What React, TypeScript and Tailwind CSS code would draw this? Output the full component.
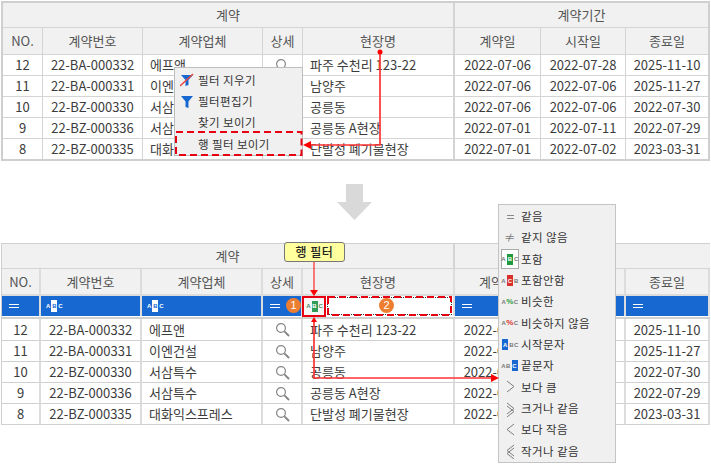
import React from "react";

const rows = [
  ["12", "22-BA-000332", "에프앤", "파주 수천리 123-22", "2022-07-06", "2022-07-28", "2025-11-10"],
  ["11", "22-BA-000331", "이엔건설", "남양주", "2022-07-06", "2022-07-06", "2025-11-27"],
  ["10", "22-BZ-000330", "서삼특수", "공릉동", "2022-07-06", "2022-07-06", "2022-07-30"],
  ["9", "22-BZ-000336", "서삼특수", "공릉동 A현장", "2022-07-01", "2022-07-11", "2022-07-29"],
  ["8", "22-BZ-000335", "대화익스프레스", "단발성 폐기물현장", "2022-07-01", "2022-07-02", "2023-03-31"],
];
const heads = ["NO.", "계약번호", "계약업체", "상세", "현장명", "계약일", "시작일", "종료일"];

function Lens() {
  return (
    <svg width="15" height="15" viewBox="0 0 15 15" fill="none" stroke="#858585">
      <circle cx="6" cy="6" r="4.4" strokeWidth="1.2" />
      <path d="M9.4 9.4L14 14" strokeWidth="1.9" />
    </svg>
  );
}

function Abc({ box, letters = "ABC", side = "text-[#6b6b6b]", i = 1 }: { box: string; letters?: string; side?: string; i?: number }) {
  const l = letters.split("");
  return (
    <span className="inline-flex h-[12px] items-center font-['Liberation_Sans',sans-serif] text-[6px] font-bold leading-none">
      {l.map((c, n) =>
        n === i ? (
          <span key={n} className={`mx-px flex h-[11px] w-[6px] items-center justify-center text-white ${box}`}>{c}</span>
        ) : (
          <span key={n} className={side}>{c}</span>
        ),
      )}
    </span>
  );
}

function Cell({ children, className = "", center = true }: { children?: React.ReactNode; className?: string; center?: boolean }) {
  return <div className={`flex items-center overflow-hidden whitespace-nowrap ${center ? "justify-center" : "pl-[7px]"} ${className}`}>{children}</div>;
}

function TopTable() {
  const colB = ["border-r", "border-r", "border-r", "border-r", "border-r-2", "border-r", "border-r", ""];
  return (
    <div className="ml-px mt-px grid w-[709px] grid-cols-[40px_100px_120px_40px_152px_86px_85px_82px] border-2 border-[#cfcfcf] text-[13px] text-[#3c3c3c]">
      <Cell className="col-span-5 h-[25px] border-b border-r-2 border-[#d4d4d4] bg-[#f1f1f1] text-[#555]">계약</Cell>
      <Cell className="col-span-3 h-[25px] border-b border-[#d4d4d4] bg-[#f1f1f1] text-[#555]">계약기간</Cell>
      {heads.map((h, i) => (
        <Cell key={h} className={`h-[27px] border-b border-[#d4d4d4] bg-[#f1f1f1] text-[#555] ${colB[i]}`}>{h}</Cell>
      ))}
      {rows.map((r, ri) => (
        <React.Fragment key={r[0]}>
          {[r[0], r[1], r[2], "", r[3], r[4], r[5], r[6]].map((v, i) => (
            <Cell key={i} center={i !== 2 && i !== 4} className={`${ri === 4 ? "h-[20px]" : "h-[21px] border-b"} border-[#d4d4d4] ${colB[i]}`}>
              {i === 3 ? <Lens /> : v}
            </Cell>
          ))}
        </React.Fragment>
      ))}
    </div>
  );
}

function Eq() {
  return (
    <span className="flex flex-col gap-[2px]">
      <span className="h-px w-[10px] bg-white" />
      <span className="h-px w-[10px] bg-white" />
    </span>
  );
}

function WhiteAbc() {
  return (
    <span className="inline-flex h-[12px] items-center font-['Liberation_Sans',sans-serif] text-[6px] font-bold leading-none text-white">
      A<span className="mx-px flex h-[12px] w-[6px] items-center justify-center bg-white text-[#1769d1]">B</span>C
    </span>
  );
}

function BottomTable() {
  const b = "border-r-2 border-[#dcdcdc]";
  const filters = [<Eq />, <WhiteAbc />, <WhiteAbc />, <Eq />, null, <Eq />, <Eq />, <Eq />];
  return (
    <div className="ml-px mt-[22px] grid w-[709px] grid-cols-[39px_101px_121px_40px_152px_86px_85px_84px] border-l border-t border-[#cfcfcf] text-[13px] text-[#3c3c3c]">
      <Cell className="col-span-5 h-[25px] border-b border-r-2 border-[#d4d4d4] bg-[#f1f1f1] text-[#555]">계약</Cell>
      <Cell className="col-span-3 h-[25px] border-b border-[#d4d4d4] bg-[#f1f1f1] text-[#555]">계약기간</Cell>
      {heads.map((h) => (
        <Cell key={h} className={`h-[27px] border-b-2 bg-[#f1f1f1] text-[#555] ${b}`}>{h}</Cell>
      ))}
      {filters.map((f, i) =>
        i === 4 ? (
          <div key={i} className={`flex h-[20px] bg-white ${b}`}>
            <div className="flex w-[23px] items-center justify-center bg-[#f6f6f6]">
              <Abc box="bg-[#2e9b57]" side="text-[#4a8a62]" />
            </div>
            <div className="m-px flex-1 border border-dotted border-[#333] bg-white" />
          </div>
        ) : (
          <div key={i} className={`flex h-[20px] items-center bg-[#1769d1] ${i === 1 || i === 2 ? "pl-[5px]" : "pl-[7px]"} ${b}`}>
            {f}
          </div>
        ),
      )}
      <div className="col-span-8 h-[3px] border-b-2 border-[#d0d0d0] bg-white" />
      {rows.map((r, ri) => (
        <React.Fragment key={r[0]}>
          {[r[0], r[1], r[2], "", r[3], r[4], r[5], r[6]].map((v, i) => (
            <Cell key={i} center={i !== 2 && i !== 4} className={`${ri === 0 ? "h-[22px]" : "h-[21px]"} border-b border-b-[#d0d0d0] ${b}`}>
              {i === 3 ? <Lens /> : v}
            </Cell>
          ))}
        </React.Fragment>
      ))}
    </div>
  );
}

function TopMenu() {
  const items: [React.ReactNode, string][] = [
    [
      <svg width="14" height="14" viewBox="0 0 14 14">
        <path d="M1 2h12L8.5 7v5l-3 1V7z" fill="#1769d1" />
        <path d="M0 13L13 1" stroke="#e8483f" strokeWidth="1.4" />
      </svg>,
      "필터 지우기",
    ],
    [
      <svg width="14" height="14" viewBox="0 0 14 14">
        <path d="M1 1h12L8.5 6.5V13l-3-1V6.5z" fill="#1769d1" />
      </svg>,
      "필터편집기",
    ],
    [null, "찾기 보이기"],
    [null, "행 필터 보이기"],
  ];
  return (
    <div className="absolute left-[174px] top-[67px] flex h-[89px] w-[129px] flex-col border border-[#bdbdbd] bg-[#f0f0f0] pt-[1.5px] text-[11.5px] tracking-[0.4px] text-[#333]">
      {items.map(([ic, t]) => (
        <div key={t} className="flex h-[21.5px] items-center">
          <span className="flex w-[23px] shrink-0 justify-center">{ic}</span>
          <span>{t}</span>
        </div>
      ))}
    </div>
  );
}

function Chev({ d, dbl }: { d: "l" | "r"; dbl?: boolean }) {
  const p = d === "r" ? "M3 2l7 5.5L3 13" : "M10 2L3 7.5l7 5.5";
  return (
    <svg width="13" height="16" viewBox="0 0 13 16" fill="none" stroke="#7d7d7d" strokeWidth="1">
      <path d={p} />
      {dbl && <path d={d === "r" ? "M3 5l7 5.5L3 16" : "M10 5L3 10.5l7 5.5"} />}
    </svg>
  );
}

function RightMenu() {
  const small = "text-[#777]";
  const items: [React.ReactNode, string, boolean?][] = [
    [<span className="flex flex-col gap-[2px]"><span className="h-px w-[7px] bg-[#888]" /><span className="h-px w-[7px] bg-[#888]" /></span>, "같음"],
    [<span className="text-[11px] leading-none text-[#777]">≠</span>, "같지 않음"],
    [<Abc box="bg-[#1f9a3c]" side={small} />, "포함", true],
    [<Abc box="bg-[#d9302c]" letters="ACB" side={small} />, "포함안함"],
    [<span className="font-['Liberation_Sans',sans-serif] text-[6px] font-bold text-[#777]">A<span className="text-[8px] text-[#2e9b3c]">%</span>C</span>, "비슷한"],
    [<span className="font-['Liberation_Sans',sans-serif] text-[6px] font-bold text-[#777]">A<span className="text-[8px] text-[#d9302c]">%</span>C</span>, "비슷하지 않음"],
    [<Abc box="bg-[#1769d1]" side={small} i={0} />, "시작문자"],
    [<Abc box="bg-[#1769d1]" side={small} i={2} />, "끝문자"],
    [<Chev d="r" />, "보다 큼"],
    [<Chev d="r" dbl />, "크거나 같음"],
    [<Chev d="l" />, "보다 작음"],
    [<Chev d="l" dbl />, "작거나 같음"],
  ];
  return (
    <div className="absolute left-[498px] top-[204px] flex h-[259px] w-[118px] flex-col border border-[#c4c4c4] bg-[#f0f0f0] pt-px text-[11.5px] tracking-[0.4px] text-[#333]">
      {items.map(([ic, t, act]) => (
        <div key={t} className="flex h-[21.55px] items-center">
          <span className={`ml-[2px] flex h-[20px] w-[18px] shrink-0 items-center justify-center ${act ? "border border-[#aaa] bg-white" : ""}`}>{ic}</span>
          <span className="ml-[2px]">{t}</span>
        </div>
      ))}
    </div>
  );
}

function Badge({ n, x }: { n: string; x: string }) {
  return (
    <span className={`absolute top-[298px] flex h-[15px] w-[15px] items-center justify-center rounded-full bg-[#ed7d31] font-['Liberation_Sans',sans-serif] text-[11px] text-white ${x}`}>
      {n}
    </span>
  );
}

export default function App() {
  return (
    <div className="relative h-[464px] w-[711px] overflow-hidden bg-white font-['Noto_Sans_CJK_KR','Noto_Sans',sans-serif]">
      <TopTable />
      <svg className="mx-auto mt-[23px] block -translate-x-[1px]" width="36" height="37" viewBox="0 0 36 37">
        <path d="M9 0h17v18h9L17.5 36 0 18h9z" fill="#d9d9d9" />
      </svg>
      <BottomTable />

      <TopMenu />
      <RightMenu />

      <div className="absolute left-[302px] top-[296px] h-[21px] w-[24px] border-2 border-[#e60012]" />
      <div className="absolute left-[284px] top-[242px] flex h-[20px] w-[61px] items-center justify-center rounded-[3px] border border-[#777] bg-[#ffff9e] text-[12px] font-medium tracking-[0.5px] text-[#222]">
        행 필터
      </div>
      <Badge n="1" x="left-[286px]" />
      <Badge n="2" x="left-[379px]" />

      <svg className="pointer-events-none absolute left-0 top-0" width="711" height="464" viewBox="0 0 711 464" fill="none">
        <rect x="176" y="132" width="125.5" height="23" stroke="#e60012" strokeWidth="2" strokeDasharray="7 4" />
        <rect x="328" y="297" width="123" height="18" stroke="#e60012" strokeWidth="2" strokeDasharray="7 4" />
        <path d="M380 52V145H310" stroke="#f33" strokeWidth="1.7" />
        <circle cx="380" cy="52" r="2.5" fill="#f00" />
        <path d="M303 145l8-4v8z" fill="#f00" />
        <path d="M314 262V290" stroke="#f00" strokeWidth="1" />
        <path d="M314 296l-4-6h8z" fill="#f00" />
        <path d="M314 322V378H492" stroke="#f33" strokeWidth="1.7" />
        <path d="M314 317l-3 5h6z" fill="#f00" />
        <path d="M499 378l-8-4v8z" fill="#f00" />
      </svg>
    </div>
  );
}
